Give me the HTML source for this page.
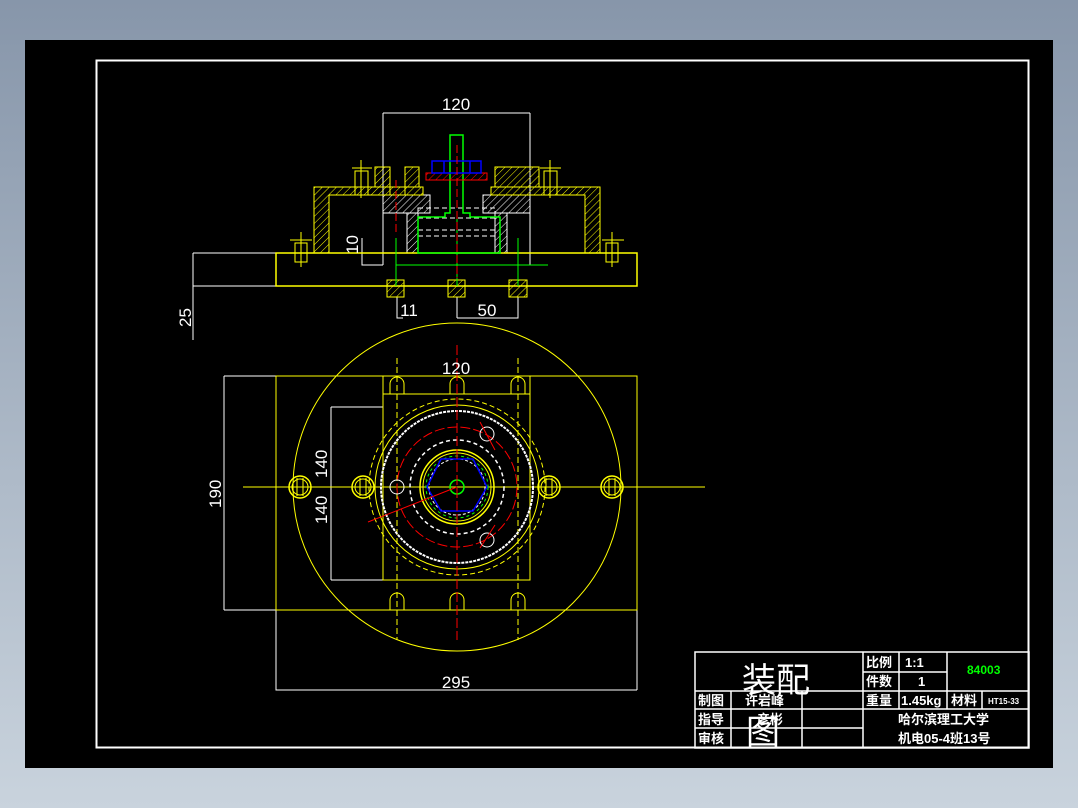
<!DOCTYPE html>
<html><head><meta charset="utf-8"><style>
html,body{margin:0;padding:0;width:1078px;height:808px;overflow:hidden;background:linear-gradient(#8796aa,#c9d3dd);}
svg{position:absolute;left:0;top:0}
text{font-family:"Liberation Sans","Noto Sans CJK SC",sans-serif;fill:#fff}
.cj{font-family:"Liberation Sans","Noto Sans CJK SC",sans-serif;font-weight:bold}
</style></head><body>
<svg width="1078" height="808" viewBox="0 0 1078 808">
<defs>
<pattern id="hy" width="5" height="5" patternUnits="userSpaceOnUse" patternTransform="rotate(45)"><line x1="0" y1="0" x2="0" y2="5" stroke="#ff0" stroke-width="1"/></pattern>
<pattern id="hw" width="5" height="5" patternUnits="userSpaceOnUse" patternTransform="rotate(45)"><line x1="0" y1="0" x2="0" y2="5" stroke="#fff" stroke-width="1"/></pattern>
<pattern id="hr" width="5" height="5" patternUnits="userSpaceOnUse" patternTransform="rotate(45)"><line x1="0" y1="0" x2="0" y2="5" stroke="#f00" stroke-width="1"/></pattern>
</defs>
<rect x="25" y="40" width="1028" height="728" fill="#000"/>
<rect x="96.5" y="60.5" width="932" height="687" fill="none" stroke="#fff" stroke-width="2"/>
<g fill="none" stroke-width="1">
<g stroke="#fff">
<path d="M383 113V265M530 113V265M383 113H530"/>
<path d="M193 253H276M193 286H276M193 253V340"/>
<path d="M362 238V265H383"/>
<path d="M397 297V318H403M457 297V318M518 297V318H457"/>
</g>
<path d="M383 195H430V213H383Z M483 195H530V213H483Z" fill="url(#hw)" stroke="#fff"/>
<path d="M407 213H418V253H407Z M495 213H507V253H495Z" fill="url(#hw)" stroke="#fff"/>
<path d="M418 208H495V253H418Z" stroke="#fff" stroke-dasharray="5 3"/>
<path d="M418 218H495M418 230H495M418 236H495" stroke="#fff" stroke-dasharray="5 3"/>
<path d="M314 187H423V195H329V253H314Z" fill="url(#hy)" stroke="#ff0"/>
<path d="M491 187H600V253H585V195H491Z" fill="url(#hy)" stroke="#ff0"/>
<path d="M375 167H390V187H375Z M405 167H419V187H405Z" fill="url(#hy)" stroke="#ff0"/>
<path d="M495 167H539V187H495Z" fill="url(#hy)" stroke="#ff0"/>
<path d="M390 167V195M405 167V195" stroke="#ff0"/>
<rect x="276" y="253" width="361" height="33" stroke="#ff0" stroke-width="1.5"/>
<g stroke="#ff0">
<path d="M355 171H368V195H355Z M352 168H372M361 160V198"/>
<path d="M544 171H557V195H544Z M540 168H561M550 160V198"/>
<path d="M295 243H307V262H295Z M290 240H312M301 232V267"/>
<path d="M606 243H618V262H606Z M602 240H624M612 232V267"/>
<rect x="387" y="280" width="17" height="17" fill="url(#hy)"/>
<rect x="448" y="280" width="17" height="17" fill="url(#hy)"/>
<rect x="509" y="280" width="18" height="17" fill="url(#hy)"/>
</g>
<path d="M450 213V135H463V213H470V217H500V253H418V217H445V213Z" stroke="#0f0" stroke-width="1.5"/>
<path d="M396 265H548M396 238V286M457 217V286M518 238V286" stroke="#0f0"/>
<rect x="426" y="173" width="61" height="7" fill="url(#hr)" stroke="#f00"/>
<path d="M432 161H481V173H432Z M444 161V173M470 161V173" stroke="#00f" stroke-width="1.5"/>
<path d="M396 180V232M457 145V278" stroke="#f00" stroke-dasharray="8 3"/>
<g stroke="#fff">
<path d="M224 376H276M224 610H276M224 376V610"/>
<path d="M331 407H383M331 580H383M331 407V580"/>
<path d="M276 610V690H637M637 610V690"/>
</g>
<circle cx="457" cy="487" r="164" stroke="#ff0"/>
<rect x="276" y="376" width="361" height="234" stroke="#ff0"/>
<rect x="383" y="394" width="147" height="186" stroke="#ff0"/>
<path d="M383 376V394M530 376V394" stroke="#ff0"/>
<path d="M243 487H705" stroke="#ff0"/>
<g stroke="#ff0">
<path d="M390 394V384A7 7 0 0 1 404 384V394"/><path d="M450 394V384A7 7 0 0 1 464 384V394"/><path d="M511 394V384A7 7 0 0 1 525 384V394"/>
<path d="M390 610V600A7 7 0 0 1 404 600V610"/><path d="M450 610V600A7 7 0 0 1 464 600V610"/><path d="M511 610V600A7 7 0 0 1 525 600V610"/>
<path d="M397 358V640M518 358V640" stroke-dasharray="6 3"/>
<circle cx="300" cy="487" r="11" stroke-width="1.5"/><circle cx="300" cy="487" r="8"/><path d="M297 478V496M303 478V496"/>
<circle cx="363" cy="487" r="11" stroke-width="1.5"/><circle cx="363" cy="487" r="8"/><path d="M360 478V496M366 478V496"/>
<circle cx="549" cy="487" r="11" stroke-width="1.5"/><circle cx="549" cy="487" r="8"/><path d="M546 478V496M552 478V496"/>
<circle cx="612" cy="487" r="11" stroke-width="1.5"/><circle cx="612" cy="487" r="8"/><path d="M609 478V496M615 478V496"/>
</g>
<circle cx="457" cy="487" r="88" stroke="#ff0" stroke-dasharray="5 3"/>
<circle cx="457" cy="487" r="82" stroke="#ff0"/>
<circle cx="457" cy="487" r="76" stroke="#fff" stroke-dasharray="3 1" stroke-width="2"/>
<circle cx="457" cy="487" r="60" stroke="#f00" stroke-dasharray="10 3"/>
<circle cx="457" cy="487" r="47" stroke="#fff" stroke-dasharray="4 3" stroke-width="1.5"/>
<circle cx="457" cy="487" r="37" stroke="#ff0" stroke-width="1.5"/>
<circle cx="457" cy="487" r="34" stroke="#ff0"/>
<circle cx="457" cy="487" r="31" stroke="#0f0" stroke-dasharray="3 3"/>
<circle cx="457" cy="487" r="28" stroke="#fff" stroke-dasharray="3 2"/>
<path d="M441 459H473L487 487L473 511H441L427 487Z" stroke="#00f" stroke-width="1.5"/>
<circle cx="457" cy="487" r="7" stroke="#0f0" stroke-width="1.5"/>
<circle cx="487" cy="434" r="7" stroke="#fff"/><circle cx="487" cy="540" r="7" stroke="#fff"/><circle cx="397" cy="487" r="7" stroke="#fff"/>
<path d="M457 345V640" stroke="#f00" stroke-dasharray="10 3"/>
<path d="M368 522L457 487M480 422L495 450M480 548L495 525" stroke="#f00"/>
<g stroke="#fff" stroke-width="1.5">
<rect x="695" y="652" width="334" height="96"/>
<path d="M695 691H863M863 672H947M863 691H1029M695 709H1029M695 728H863"/>
<path d="M731 691V748M802 691V748M863 652V748M899 652V709M947 652V709M982 691V709"/>
</g>
</g>
<text x="456" y="110" font-size="17" text-anchor="middle">120</text>
<text x="456" y="374" font-size="17" text-anchor="middle">120</text>
<text x="409" y="316" font-size="17" text-anchor="middle">11</text>
<text x="487" y="316" font-size="17" text-anchor="middle">50</text>
<text x="456" y="688" font-size="17" text-anchor="middle">295</text>
<text font-size="17" transform="translate(358,254) rotate(-90)">10</text>
<text font-size="17" transform="translate(191,327) rotate(-90)">25</text>
<text font-size="17" transform="translate(221,508) rotate(-90)">190</text>
<text font-size="17" transform="translate(327,478) rotate(-90)">140</text>
<text font-size="17" transform="translate(327,524) rotate(-90)">140</text>
<g class="cj">
<text x="742" y="692" font-size="34" style="font-weight:normal">装配</text>
<text x="746" y="744" font-size="34" style="font-weight:normal">图</text>
<text x="698" y="705" font-size="13">制图</text>
<text x="698" y="724" font-size="13">指导</text>
<text x="698" y="743" font-size="13">审核</text>
<text x="745" y="705" font-size="13">许岩峰</text>
<text x="757" y="724" font-size="13">彦彬</text>
<text x="866" y="667" font-size="13">比例</text>
<text x="866" y="686" font-size="13">件数</text>
<text x="866" y="705" font-size="13">重量</text>
<text x="905" y="667" font-size="13">1:1</text>
<text x="918" y="686" font-size="13">1</text>
<text x="901" y="705" font-size="13">1.45kg</text>
<text x="951" y="705" font-size="13">材料</text>
<text x="988" y="704" font-size="8">HT15-33</text>
<text x="967" y="674" font-size="12" style="fill:#0f0">84003</text>
<text x="898" y="724" font-size="13">哈尔滨理工大学</text>
<text x="898" y="743" font-size="13">机电05-4班13号</text>
</g>
</svg>
</body></html>
